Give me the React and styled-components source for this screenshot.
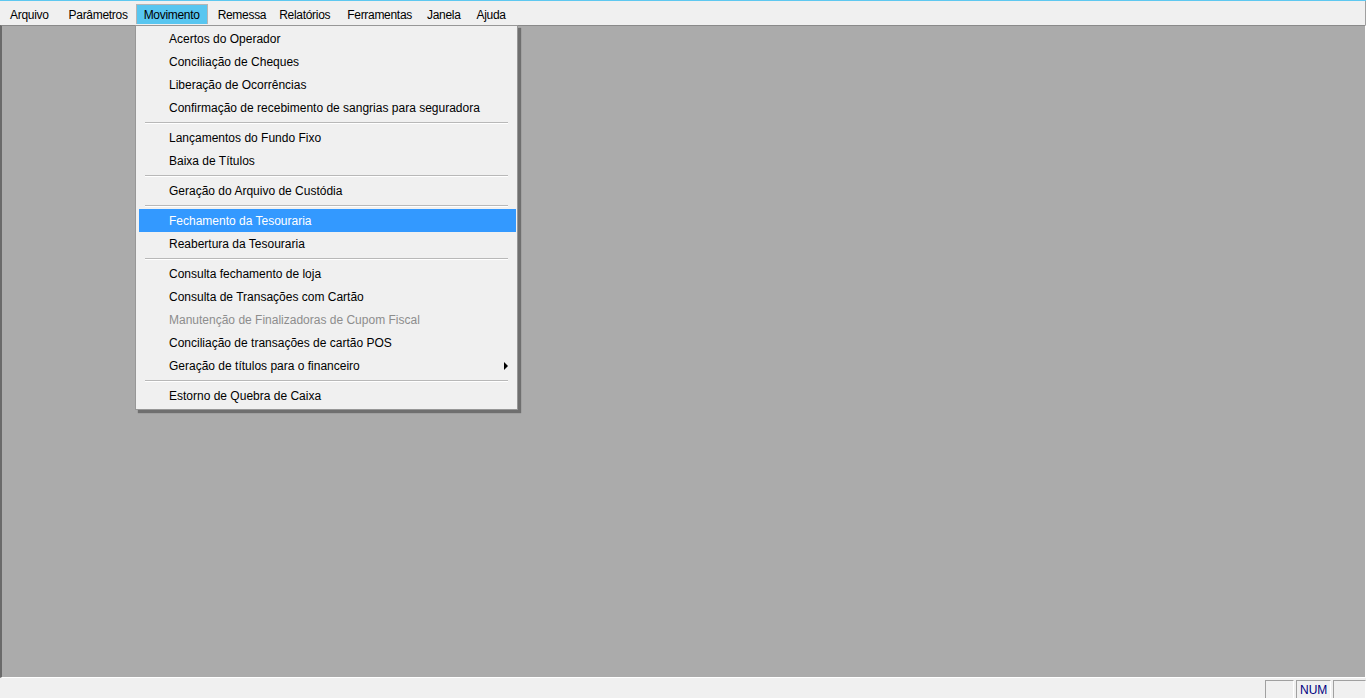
import React from "react";
import styled, { createGlobalStyle } from "styled-components";

const Global = createGlobalStyle`
  html, body { margin: 0; padding: 0; }
  body { font-family: "Liberation Sans", Arial, sans-serif; font-size: 12px; color: #000; }
  * { box-sizing: border-box; }
`;

const Page = styled.div`
  position: relative;
  width: 1366px;
  height: 698px;
  display: flex;
  flex-direction: column;
  background: #f0f0f0;
  overflow: hidden;
`;

const TopLine = styled.div`
  height: 1px;
  background: #5ec8f0;
  flex: none;
`;

const MenuBar = styled.div`
  height: 24px;
  flex: none;
  display: flex;
  align-items: flex-start;
  padding: 3px 0 0 2px;
  background: #f0f0f0;
  border-right: 1px solid #a0a0a0;
`;

const MenuItem = styled.div`
  height: 20px;
  margin-left: ${(p) => p.$ml || 0}px;
  padding: 0 7px 0 7px;
  display: flex;
  align-items: center;
  white-space: nowrap;
  letter-spacing: -0.3px;
  border: 1px solid ${(p) => (p.$active ? "#b5b5b5" : "transparent")};
  border-bottom: none;
  background: ${(p) => (p.$active ? "#58c6f0" : "transparent")};
`;

const Workspace = styled.div`
  flex: 1;
  background: #ababab;
  border-top: 1px solid #8a8a8a;
  border-left: 2px solid #6a6a6a;
  border-right: 1px solid #ffffff;
  border-bottom: 1px solid #ffffff;
`;

const StatusBar = styled.div`
  height: 20px;
  flex: none;
  display: flex;
  justify-content: flex-end;
  align-items: stretch;
  padding-top: 2px;
  gap: 2px;
  background: #f0f0f0;
`;

const Panel = styled.div`
  width: ${(p) => p.$w}px;
  border-top: 1px solid #a0a0a0;
  border-left: 1px solid #a0a0a0;
  border-right: 1px solid #ffffff;
  display: flex;
  align-items: center;
  padding-left: 3px;
  color: #000080;
  font-size: 12px;
`;

const Dropdown = styled.div`
  position: absolute;
  left: 135px;
  top: 25px;
  width: 383px;
  background: #f0f0f0;
  border: 1px solid #979797;
  padding: 1px 1px 2px 3px;
  box-shadow: 3px 3px 1px 0 rgba(0, 0, 0, 0.35);
  display: flex;
  flex-direction: column;
`;

const Entry = styled.div`
  position: relative;
  height: 23px;
  display: flex;
  align-items: center;
  padding-left: 30px;
  white-space: nowrap;
  color: ${(p) => (p.$selected ? "#ffffff" : p.$disabled ? "#8d8d8d" : "#000000")};
  background: ${(p) => (p.$selected ? "#3399ff" : "transparent")};
`;

const Arrow = styled.span`
  position: absolute;
  right: 8px;
  top: 50%;
  margin-top: -4px;
  width: 0;
  height: 0;
  border-top: 4px solid transparent;
  border-bottom: 4px solid transparent;
  border-left: 4px solid #000;
`;

const Separator = styled.div`
  height: 7px;
  display: flex;
  align-items: center;
  padding: 0 8px 1px 6px;
  &::before {
    content: "";
    flex: 1;
    height: 1px;
    background: #b8b8b8;
    box-shadow: 0 1px 0 #ffffff;
  }
`;

const menuBar = [
  { label: "Arquivo" },
  { label: "Parâmetros", ml: 4 },
  { label: "Movimento", active: true },
  { label: "Remessa", ml: 2 },
  { label: "Relatórios", ml: -3 },
  { label: "Ferramentas", ml: 1 },
  { label: "Janela", ml: -1 },
  { label: "Ajuda" },
];

const items = [
  "Acertos do Operador",
  "Conciliação de Cheques",
  "Liberação de Ocorrências",
  "Confirmação de recebimento de sangrias para seguradora",
  "-",
  "Lançamentos do Fundo Fixo",
  "Baixa de Títulos",
  "-",
  "Geração do Arquivo de Custódia",
  "-",
  { label: "Fechamento da Tesouraria", selected: true },
  "Reabertura da Tesouraria",
  "-",
  "Consulta fechamento de loja",
  "Consulta de Transações com Cartão",
  { label: "Manutenção de Finalizadoras de Cupom Fiscal", disabled: true },
  "Conciliação de transações de cartão POS",
  { label: "Geração de títulos para o financeiro", sub: true },
  "-",
  "Estorno de Quebra de Caixa",
];

export default function App() {
  return (
    <>
      <Global />
      <Page>
        <TopLine />
        <MenuBar>
          {menuBar.map((m) => (
            <MenuItem key={m.label} $active={m.active} $ml={m.ml}>
              {m.label}
            </MenuItem>
          ))}
        </MenuBar>
        <Workspace />
        <StatusBar>
          <Panel $w={29} />
          <Panel $w={35}>NUM</Panel>
          <Panel $w={33} />
        </StatusBar>
        <Dropdown>
          {items.map((it, i) => {
            if (it === "-") return <Separator key={i} />;
            const o = typeof it === "string" ? { label: it } : it;
            return (
              <Entry key={i} $selected={o.selected} $disabled={o.disabled}>
                {o.label}
                {o.sub && <Arrow />}
              </Entry>
            );
          })}
        </Dropdown>
      </Page>
    </>
  );
}
